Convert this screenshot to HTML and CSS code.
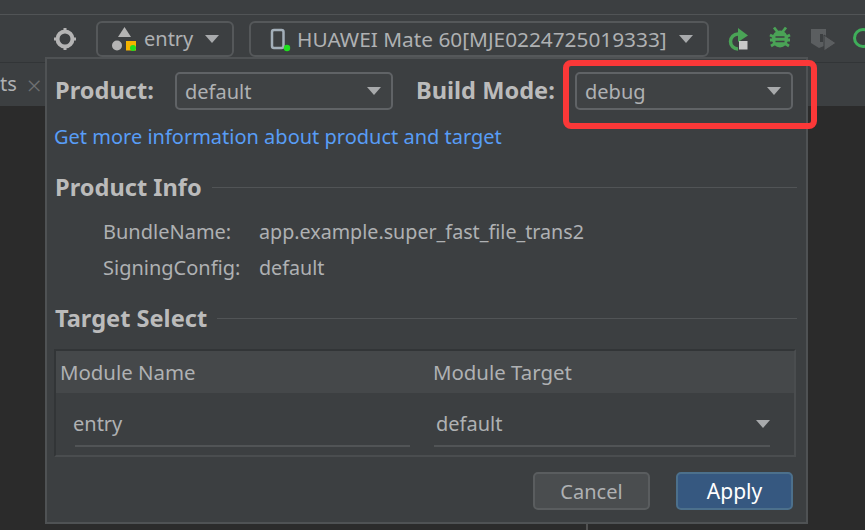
FILE: index.html
```html
<!DOCTYPE html>
<html lang="en">
<head>
<meta charset="utf-8">
<title>Build configuration</title>
<link rel="stylesheet" href="styles.css">
</head>
<body>
<div class="ide">
  <div class="titlebar"></div>
  <div class="toolbar">
    <svg class="ic-target" width="24" height="24" viewBox="0 0 24 24"><circle cx="12" cy="12" r="7.500" fill="none" stroke="#b4b4b4" stroke-width="4"/><path d="M12 1v4M12 19v4M1 12h4M19 12h4" stroke="#b4b4b4" stroke-width="3"/></svg>
    <div class="tool-btn entry-btn">
      <svg width="28" height="28" viewBox="0 0 28 28"><path d="M14.500 2L21 12H8z" fill="#b4b4b4"/><circle cx="7" cy="20.500" r="5" fill="#b4b4b4"/><rect x="16" y="16" width="10" height="9.500" fill="#f4b400"/><circle cx="23" cy="23" r="3" fill="#1fe01f"/></svg>
      <span class="tool-text">entry</span>
      <span class="caret caret-end"></span>
    </div>
    <div class="tool-btn device-btn">
      <svg width="22" height="28" viewBox="0 0 22 28"><rect x="3" y="5" width="11.500" height="18" rx="2" fill="none" stroke="#a3afb9" stroke-width="2.500"/><circle cx="18" cy="23" r="3.200" fill="#1fe01f"/></svg>
      <span class="tool-text device-text">HUAWEI Mate 60[MJE0224725019333]</span>
      <span class="caret caret-end"></span>
    </div>
    <div class="actions">
      <svg width="26" height="26" viewBox="0 0 26 26"><path d="M12 23A7.500 7.500 0 0 1 12 8" fill="none" stroke="#4aa356" stroke-width="3.500"/><path d="M12 2l10 7.500L12 16z" fill="#4aa356"/><rect x="13" y="15" width="8.500" height="8.500" fill="#c8c8c8"/></svg>
      <svg width="24" height="26" viewBox="0 0 24 26"><path d="M5 1.500l3.500 4.500M17 1.500L13.500 6M1 9l4 2M21 9l-4 2M1 14h4M21 14h-4M2 20l4-2.500M20 20l-4-2.500" stroke="#4aa356" stroke-width="2.800" fill="none"/><ellipse cx="11" cy="13" rx="8" ry="8.500" fill="#4aa356"/><path d="M6.500 11h9M6.500 15.500h9" stroke="#3c3f41" stroke-width="1.600"/></svg>
      <svg width="26" height="26" viewBox="0 0 26 26"><path d="M1 3h15v9l-2 8-5 2-8-5z" fill="#5b5e60"/><path d="M10 8h3v8h-3z" fill="#3c3f41"/><path d="M14 9l12 8-12 8z" fill="#5b5e60" stroke="#3c3f41" stroke-width="1"/></svg>
      <svg class="ic-cut" width="22" height="26" viewBox="0 0 22 26"><circle cx="11" cy="12" r="8.500" fill="none" stroke="#3fae5a" stroke-width="3"/></svg>
    </div>
  </div>
  <div class="tabbar">
    <span class="tab-text">ts</span>
    <span class="tab-close">×</span>
  </div>
  <div class="editor"></div>
  <div class="divider"></div>
</div>

<section class="popup">
  <div class="form-row">
    <label class="field-label">Product:</label>
    <div class="select"><span>default</span><span class="caret"></span></div>
    <label class="field-label mode-label">Build Mode:</label>
    <div class="select"><span>debug</span><span class="caret"></span></div>
  </div>
  <a class="link">Get more information about product and target</a>

  <div class="section-head info-head"><h2>Product Info</h2><span class="rule"></span></div>
  <dl class="info">
    <dt>BundleName:</dt><dd>app.example.super_fast_file_trans2</dd>
    <dt>SigningConfig:</dt><dd>default</dd>
  </dl>

  <div class="section-head target-head"><h2>Target Select</h2><span class="rule"></span></div>
  <div class="table">
    <div class="thead"><span>Module Name</span><span>Module Target</span></div>
    <div class="tbody">
      <div class="cell cell-name">entry</div>
      <div class="cell cell-target"><span>default</span><span class="caret"></span></div>
    </div>
  </div>

  <div class="buttons">
    <button class="btn">Cancel</button>
    <button class="btn primary">Apply</button>
  </div>
</section>
<div class="highlight"></div>
</body>
</html>
```
FILE: styles.css
```css
* { box-sizing: border-box; }
html, body { margin: 0; padding: 0; }
body {
  width: 865px;
  height: 530px;
  overflow: hidden;
  position: relative;
  background: #2b2b2b;
  font-family: "Noto Sans", "Open Sans", sans-serif;
  color: #afb1b3;
  font-size: 20px;
}
.ide { height: 530px; display: flex; flex-direction: column; }
.titlebar { height: 15px; background: #3c3f41; border-bottom: 1px solid #515456; }
.toolbar {
  height: 47px;
  background: #3c3f41;
  display: flex;
  align-items: flex-start;
  padding: 6px 0 0 53px;
  overflow: hidden;
}
.toolbar > * { flex-shrink: 0; }
.ic-target { margin-top: 6px; }
.tool-btn {
  height: 36px;
  border: 2px solid #55585a;
  border-radius: 6px;
  display: flex;
  align-items: center;
}
.entry-btn { width: 138px; margin-left: 19px; padding: 0 13px 0 12px; gap: 6px; }
.device-btn { width: 460px; margin-left: 15px; padding: 0 14px 0 18px; gap: 6px; white-space: nowrap; }
.tool-text { color: #afb1b3; line-height: 30px; }
.device-text { font-size: 20.800px; }
.caret {
  width: 0;
  height: 0;
  border-left: 7px solid transparent;
  border-right: 7px solid transparent;
  border-top: 8px solid #a8aaac;
}
.caret-end { margin-left: auto; }
.actions { display: flex; gap: 17px; margin-left: 17px; margin-top: 5px; align-items: flex-start; }
.actions svg { flex-shrink: 0; }
.ic-cut { margin-left: -1px; }
.tabbar {
  height: 44px;
  background: #3c3f41;
  border-top: 1px solid #323537;
  display: flex;
  align-items: center;
  gap: 10px;
  line-height: 1;
}
.tab-text { color: #afb1b3; padding-bottom: 2px; }
.tab-close { color: #6e7072; font-size: 26px; font-weight: 300; }
.editor { flex: 1; background: #2b2b2b; }
.divider {
  position: absolute;
  left: 586px;
  top: 522px;
  width: 2px;
  height: 8px;
  background: #515151;
}
.popup {
  position: absolute;
  left: 45px;
  top: 57px;
  width: 763px;
  height: 467px;
  background: #3c3f41;
  border: 2px solid #4f5254;
  padding: 12px 9px 0 7px;
}
.form-row { display: flex; align-items: center; height: 40px; }
.field-label {
  font-weight: 700;
  font-size: 23.600px;
  color: #bbbbbb;
  width: 121px;
  white-space: nowrap;
  padding: 0 0 2px 1px;
}
.mode-label { width: 159px; margin-left: 23px; padding-left: 0; }
.select {
  width: 218px;
  height: 38px;
  border: 2px solid #606366;
  border-radius: 5px;
  background: #3f4244;
  display: flex;
  justify-content: space-between;
  align-items: center;
  padding: 0 10px 0 8px;
  color: #afb1b3;
}
.link { display: block; color: #589df6; margin-top: 10px; line-height: 32px; white-space: nowrap; }
.section-head { display: flex; align-items: center; gap: 10px; height: 32px; }
.section-head h2 { margin: 0; padding-left: 1px; font-size: 23.600px; font-weight: 700; color: #bbbbbb; white-space: nowrap; }
.rule { flex: 1; height: 1px; background: #515456; }
.info-head { margin-top: 18px; }
.info {
  display: grid;
  grid-template-columns: 156px 1fr;
  grid-auto-rows: 36px;
  margin: 11px 0 0 49px;
  align-items: center;
  line-height: 36px;
}
.info dt, .info dd { margin: 0; white-space: nowrap; }
.info dd { font-size: 19.700px; }
.target-head { margin-top: 16px; }
.table {
  margin-top: 15px;
  width: 742px;
  height: 108px;
  border: 2px solid #323537;
  border-bottom-color: #4a4d4f;
  border-right-color: #4a4d4f;
  display: flex;
  flex-direction: column;
}
.thead {
  height: 42px;
  background: #45484a;
  display: grid;
  grid-template-columns: 373px 1fr;
  padding-left: 4px;
  align-items: center;
  line-height: 42px;
  font-size: 20.400px;
}
.tbody { flex: 1; display: grid; grid-template-columns: 335px 336px; gap: 24px; padding: 14px 0 0 19px; }
.cell {
  height: 40px;
  border-bottom: 2px solid #515456;
  line-height: 34px;
  display: flex;
  justify-content: space-between;
  align-items: center;
  padding-bottom: 4px;
}
.cell-name { text-indent: -2px; }
.cell-target { padding: 0 0 4px 2px; }
.buttons { display: flex; justify-content: flex-end; gap: 26px; margin-top: 15px; padding-right: 4px; }
.btn {
  width: 117px;
  height: 38px;
  border: 2px solid #5a5d5f;
  border-radius: 5px;
  background: #4a4d4f;
  color: #afb1b3;
  font: inherit;
  padding: 0;
}
.btn.primary { background: #365880; border-color: #4c708c; color: #ffffff; font-size: 21px; }
.highlight {
  position: absolute;
  left: 563px;
  top: 60px;
  width: 254px;
  height: 69px;
  border: 6px solid #fb3838;
  border-radius: 8px;
}
```
